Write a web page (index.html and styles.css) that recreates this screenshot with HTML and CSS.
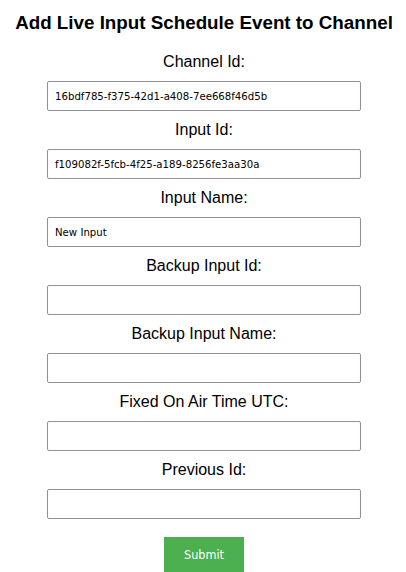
FILE: index.html
```html
<!DOCTYPE html>
<html lang="en">
<head>
<meta charset="utf-8">
<title>Add Live Input Schedule Event to Channel</title>
<link rel="stylesheet" href="styles.css">
</head>
<body>
<div class="page">
  <h2 class="title">Add Live Input Schedule Event to Channel</h2>
  <form class="form">
    <label class="label" for="channelId">Channel Id:</label>
    <input class="field" id="channelId" type="text" value="16bdf785-f375-42d1-a408-7ee668f46d5b">
    <label class="label" for="inputId">Input Id:</label>
    <input class="field" id="inputId" type="text" value="f109082f-5fcb-4f25-a189-8256fe3aa30a">
    <label class="label" for="inputName">Input Name:</label>
    <input class="field" id="inputName" type="text" value="New Input">
    <label class="label" for="backupInputId">Backup Input Id:</label>
    <input class="field" id="backupInputId" type="text" value="">
    <label class="label" for="backupInputName">Backup Input Name:</label>
    <input class="field" id="backupInputName" type="text" value="">
    <label class="label" for="fixedOnAir">Fixed On Air Time UTC:</label>
    <input class="field" id="fixedOnAir" type="text" value="">
    <label class="label" for="previousId">Previous Id:</label>
    <input class="field" id="previousId" type="text" value="">
    <button class="submit" type="button">Submit</button>
  </form>
</div>
</body>
</html>
```

FILE: styles.css
```css
html, body {
  margin: 0;
  padding: 0;
  background: #ffffff;
}

.page {
  padding: 11px 0 0 2px;
  font-family: "Liberation Sans", Arial, sans-serif;
  color: #000;
}

.title {
  margin: 0 0 19px;
  font-size: 18.8px;
  line-height: 23px;
  font-weight: bold;
  text-align: center;
}

.form {
  display: flex;
  flex-direction: column;
  align-items: center;
  gap: 10px;
}

.label {
  font-size: 16px;
  line-height: 18px;
}

.field {
  box-sizing: border-box;
  width: 314px;
  height: 30px;
  margin: 0;
  padding: 0 7px;
  border: 1px solid #8f8f9d;
  border-radius: 2px;
  background: #fff;
  font-family: "DejaVu Sans Condensed", "DejaVu Sans", sans-serif;
  font-size: 11.3px;
  color: #000;
}

.submit {
  margin-top: 8px;
  padding: 10px 20px;
  border: none;
  background: #4caf50;
  color: #fff;
  font-family: "DejaVu Sans Condensed", "DejaVu Sans", sans-serif;
  font-size: 12.5px;
  line-height: 16px;
  width: 80px;
  height: 36px;
}
```
